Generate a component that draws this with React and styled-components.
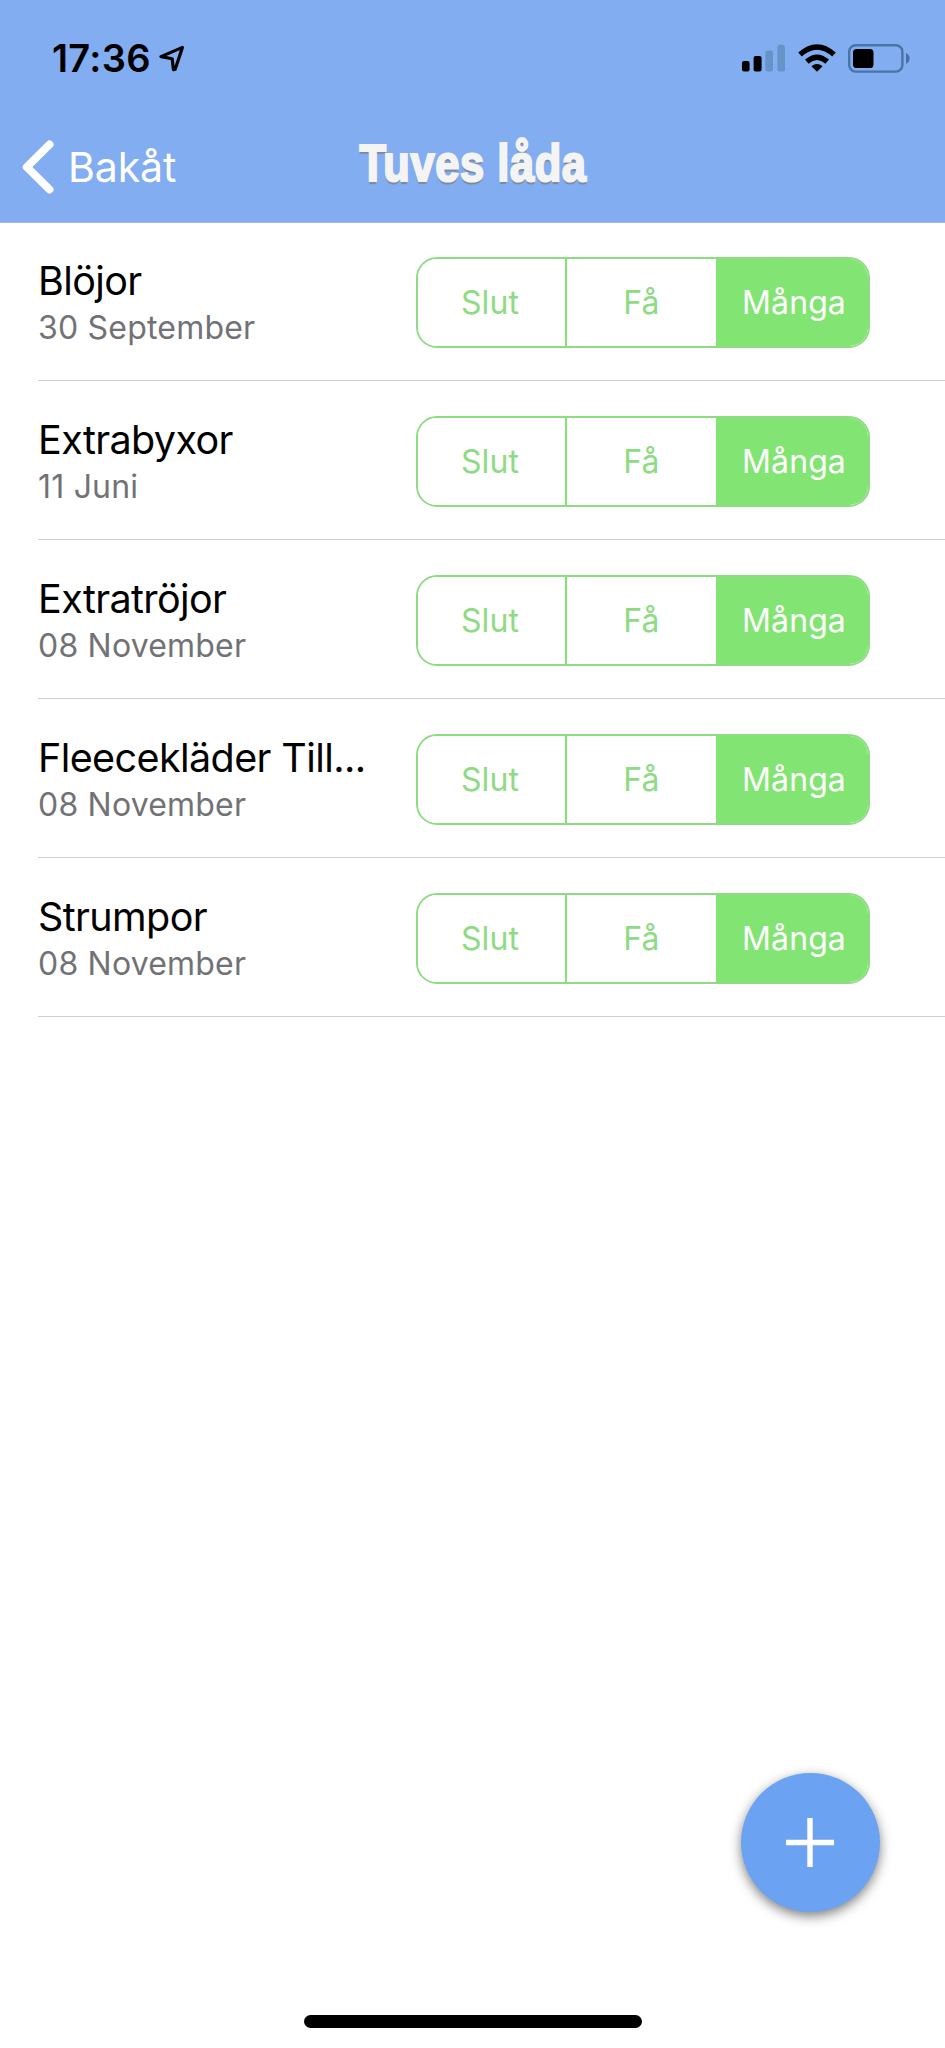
import React, { useState } from "react";
import styled, { createGlobalStyle } from "styled-components";

const OPTIONS = ["Slut", "Få", "Många"];

const ITEMS = [
  { name: "Blöjor", date: "30 September" },
  { name: "Extrabyxor", date: "11 Juni" },
  { name: "Extratröjor", date: "08 November" },
  { name: "Fleecekläder Till...", date: "08 November" },
  { name: "Strumpor", date: "08 November" },
];

function AmountPicker() {
  const [selected, setSelected] = useState("Många");

  return (
    <Segments>
      {OPTIONS.map((option) => (
        <Segment
          key={option}
          $active={option === selected}
          onClick={() => setSelected(option)}
        >
          {option}
        </Segment>
      ))}
    </Segments>
  );
}

function StatusIcons() {
  return (
    <Icons>
      <svg width="44" height="28" viewBox="0 0 44 28">
        <rect x="0" y="17" width="7.6" height="10.5" rx="2" />
        <rect x="11.6" y="12" width="8" height="15.5" rx="2" />
        <g fill="#6693c8">
          <rect x="23.4" y="6.5" width="7.6" height="21" rx="2" />
          <rect x="35.4" y="0.7" width="7.6" height="26.8" rx="2" />
        </g>
      </svg>
      <svg width="38" height="28" viewBox="0 0 38 28">
        <path d="M19 27.8 L13.4 22.2 Q19 17.6 24.6 22.2 Z" />
        <g fill="none" stroke="#000" strokeWidth="5.4">
          <path d="M8.8 17.6 Q19 8.8 29.2 17.6" />
          <path d="M2 10.6 Q19 -4.6 36 10.6" />
        </g>
      </svg>
      <svg width="62" height="29" viewBox="0 0 62 29">
        <rect
          x="1.2"
          y="1.2"
          width="53.2"
          height="26.4"
          rx="6.5"
          fill="none"
          stroke="#4a74a8"
          strokeWidth="2.4"
        />
        <rect x="5" y="5" width="20.5" height="19" rx="3.6" />
        <path d="M58 9 Q61.6 10.8 61.6 14.4 Q61.6 18 58 19.8 Z" fill="#4a6fab" />
      </svg>
    </Icons>
  );
}

function App() {
  return (
    <Screen>
      <GlobalStyle />
      <Header>
        <StatusBar>
          <Time>17:36</Time>
          <svg width="26" height="27" viewBox="0 0 26 27">
            <path
              d="M23.4 2.4 L2 11.6 L13.2 13.8 L14.4 24.6 L16.2 24.2 Z"
              fill="none"
              stroke="#000"
              strokeWidth="3.2"
              strokeLinejoin="round"
            />
          </svg>
          <StatusIcons />
        </StatusBar>
        <NavBar>
          <BackButton>
            <svg width="32" height="54" viewBox="0 0 32 54">
              <path
                d="M27.5 4.5 L4.8 27 L27.5 49.5"
                fill="none"
                stroke="#fff"
                strokeWidth="8"
                strokeLinecap="round"
                strokeLinejoin="round"
              />
            </svg>
            <span>Bakåt</span>
          </BackButton>
          <Title>
            <TitleText>Tuves låda</TitleText>
          </Title>
        </NavBar>
      </Header>
      <List>
        {ITEMS.map((item) => (
          <Row key={item.name}>
            <Info>
              <Name>{item.name}</Name>
              <DateText>{item.date}</DateText>
            </Info>
            <AmountPicker />
          </Row>
        ))}
      </List>
      <AddButton aria-label="Lägg till">
        <svg width="48" height="49" viewBox="0 0 48 49">
          <path d="M0 24.5 H48 M24 0 V49" stroke="#fff" strokeWidth="5.4" />
        </svg>
      </AddButton>
      <HomeIndicator />
    </Screen>
  );
}

export default App;

const GlobalStyle = createGlobalStyle`
  * {
    box-sizing: border-box;
  }

  body {
    margin: 0;
    background: #fff;
    font-family: Inter, "Liberation Sans", sans-serif;
  }

  button {
    font-family: inherit;
    border: 0;
    padding: 0;
    background: none;
  }

  svg {
    display: block;
    flex: none;
  }
`;

const Screen = styled.div`
  position: relative;
  width: 945px;
  height: 2048px;
  overflow: hidden;
  background: #fff;
`;

const Header = styled.header`
  height: 222px;
  background: #82adf1;
  box-shadow: 0 1px 0 #a3b8dc;
`;

const StatusBar = styled.div`
  display: flex;
  align-items: center;
  height: 116px;
  padding: 0 35px 0 52px;
`;

const Time = styled.div`
  width: 107px;
  font-size: 38px;
  font-weight: 600;
  line-height: 44px;
  letter-spacing: 0.3px;
`;

const Icons = styled.div`
  display: flex;
  align-items: center;
  gap: 12px;
  margin-left: auto;
`;

const NavBar = styled.nav`
  display: grid;
  grid-template-columns: 300px 1fr 300px;
  align-items: center;
  height: 101px;
`;

const BackButton = styled.button`
  display: flex;
  align-items: center;
  gap: 14px;
  padding-left: 22px;
  color: #fff;
  font-size: 41px;
  line-height: 50px;
  letter-spacing: -0.1px;
`;

const Title = styled.h1`
  display: flex;
  justify-content: center;
  margin: 0;
`;

const TitleText = styled.span`
  padding-bottom: 7px;
  color: #f4f4f4;
  font-family: "Liberation Sans", sans-serif;
  font-size: 52px;
  font-weight: 700;
  line-height: 60px;
  letter-spacing: 0.7px;
  white-space: nowrap;
  text-shadow: 0 3px 1px #7d8796;
  -webkit-text-stroke: 2.2px #f4f4f4;
  transform: scaleX(0.835);
`;

const List = styled.ul`
  margin: 0;
  padding: 0 0 0 38px;
  list-style: none;
`;

const Row = styled.li`
  display: flex;
  align-items: flex-start;
  height: 159px;
  border-bottom: 1px solid #d0d0d2;
`;

const Info = styled.div`
  width: 378px;
  padding: 35px 0 0;
`;

const Name = styled.div`
  color: #000;
  font-size: 39.5px;
  line-height: 48px;
  letter-spacing: -0.6px;
  white-space: nowrap;
`;

const DateText = styled.div`
  color: #727276;
  font-size: 32px;
  line-height: 46px;
  letter-spacing: 0.2px;
`;

const Segments = styled.div`
  display: grid;
  grid-template-columns: 147px 151px 1fr;
  width: 454px;
  height: 91px;
  margin-top: 35px;
  overflow: hidden;
  border: 2px solid #8edb84;
  border-radius: 21px;
`;

const Segment = styled.button`
  color: ${({ $active }) => ($active ? "#fff" : "#8edb84")};
  background: ${({ $active }) => ($active ? "#82e472" : "#fff")};
  font-size: 32px;
  letter-spacing: 0.1px;

  &:first-child {
    padding-right: 3px;
  }

  & + & {
    border-left: 2px solid ${({ $active }) => ($active ? "#82e472" : "#8edb84")};
  }

  &:last-child {
    padding-left: 2px;
  }
`;

const AddButton = styled.button`
  position: absolute;
  left: 741px;
  top: 1773px;
  display: flex;
  align-items: center;
  justify-content: center;
  width: 139px;
  height: 139px;
  padding-right: 2px;
  border-radius: 50%;
  background: #6ba2f2;
  box-shadow: 0 4px 12px rgba(0, 0, 0, 0.5);
`;

const HomeIndicator = styled.div`
  position: absolute;
  left: 304px;
  top: 2015px;
  width: 338px;
  height: 13px;
  border-radius: 7px;
  background: #000;
`;
